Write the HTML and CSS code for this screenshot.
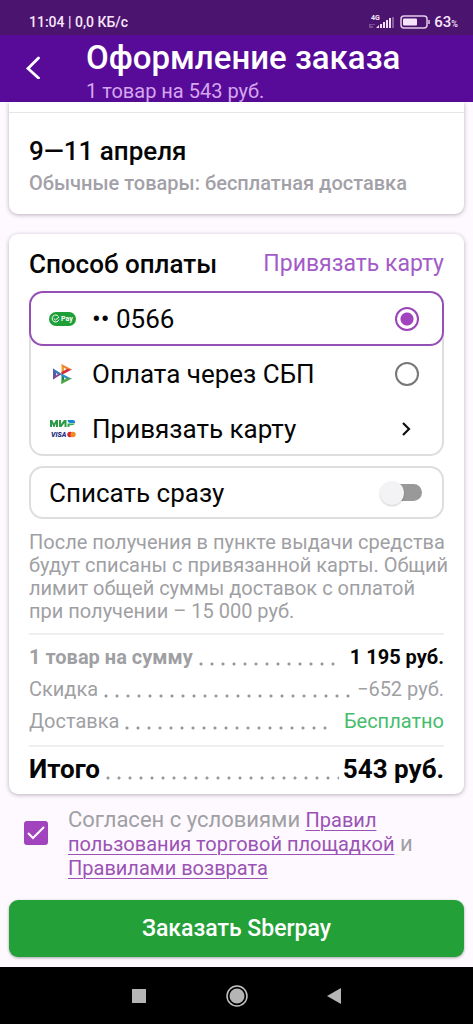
FILE: index.html
```html
<!DOCTYPE html>
<html lang="ru">
<head>
<meta charset="utf-8">
<meta name="viewport" content="width=device-width, initial-scale=1">
<title>Оформление заказа</title>
<link rel="stylesheet" href="styles.css">
</head>
<body>
<div class="status">
  <span class="status-time">11:04 | 0,0 КБ/с</span>
  <span class="status-right">
    <svg class="signal" width="25" height="16" viewBox="0 0 25 16" aria-hidden="true">
      <text class="signal-text" x="2" y="6">4G</text>
      <path d="M1 10v4M3 10v1M3 12v2M5 10v1" stroke="#a787b8"/>
      <path d="M7 14l3-3v3z" fill="#f3def6"/>
      <path d="M12 14V10M15 14V8M18 14V6M21 14V4" stroke="#f3def6" stroke-width="2"/>
      <path d="M24 14V3" stroke="#84619b" stroke-width="2"/>
    </svg>
    <svg class="battery" width="30" height="14" viewBox="0 0 30 14" aria-hidden="true">
      <rect x="1" y="1" width="26" height="12" rx="3" fill="none" stroke="#e3cbea" stroke-width="1.5"/>
      <rect x="3" y="3.5" width="14" height="7" rx="1" fill="#f5e4f7"/>
      <path d="M29 5v4" stroke="#e3cbea" stroke-width="1.5"/>
    </svg>
    <span class="status-charge">63<small>%</small></span>
  </span>
</div>

<header class="header">
  <button class="back" type="button" aria-label="Назад">
    <svg width="16" height="24" viewBox="0 0 16 24" aria-hidden="true"><path d="M13.500 3 3 13.500 13.500 23" fill="none" stroke="#fff" stroke-width="2.800" stroke-linecap="round"/></svg>
  </button>
  <div class="header-text">
    <h1 class="title">Оформление заказа</h1>
    <p class="subtitle">1 товар на 543 руб.</p>
  </div>
</header>

<main class="content">
  <section class="card delivery">
    <div class="delivery-body">
      <h2 class="heading">9—11 апреля</h2>
      <p class="delivery-note">Обычные товары: бесплатная доставка</p>
    </div>
  </section>

  <section class="card payment">
    <div class="payment-head">
      <h2 class="heading">Способ оплаты</h2>
      <a class="link-card" href="#">Привязать карту</a>
    </div>

    <div class="options">
      <label class="option option-selected">
        <svg class="logo" width="28" height="14" viewBox="0 0 28 14" aria-hidden="true">
          <rect width="27" height="14" rx="7" fill="#1f9f38"/>
          <path d="M9.500 4.500A3.500 3.500 0 1 0 10 7.500M4.800 6.500l1.700 1.500L10 5" fill="none" stroke="#fff" stroke-width="1"/>
          <text class="pay-text" x="12" y="9">Pay</text>
        </svg>
        <span class="option-name">•• 0566</span>
        <input class="radio" type="radio" name="pay" checked>
      </label>
      <label class="option">
        <svg class="logo" width="28" height="22" viewBox="0 0 28 22" aria-hidden="true">
          <path d="M4 5.500v11l3-2V8z" fill="#5b57a2"/>
          <path d="M4 5.500 13 11l-4 .500L5.500 9z" fill="#3c78bb"/>
          <path d="M4 16.500 13 11H9l-3.500 2.500z" fill="#8b4a91"/>
          <path d="M12.500 1v10l2.500-1.500V4z" fill="#e9a22c"/>
          <path d="M12.500 1 23 6.500h-5L13.500 4z" fill="#ef8532"/>
          <path d="M23 6.500 12.500 12v-3L18 6z" fill="#d42c3b"/>
          <path d="M12.500 11v10l2.500-2v-6z" fill="#24804c"/>
          <path d="M12.500 10.500 23 16h-5l-5.500-3z" fill="#288bd0"/>
          <path d="M23 15.500l-10.500 5.500v-3l5.500-3z" fill="#4da545"/>
        </svg>
        <span class="option-name">Оплата через СБП</span>
        <input class="radio" type="radio" name="pay">
      </label>
      <button class="option option-more" type="button">
        <svg class="logo" width="28" height="20" viewBox="0 0 28 20" aria-hidden="true">
          <path d="M1 8V1h2.200L5 4.500 6.800 1H9v7H7V4.500L5.600 8H4.400L3 4.500V8z" fill="#2b9a46"/>
          <path d="M10 8V1h2v4l3-4h2.500v7h-2V4l-3 4z" fill="#2b9a46"/>
          <path d="M18.500 8V4.500H26Q25.200 6.300 23 6.300h-2.500V8z" fill="#35a856"/>
          <path d="M18.500 1H24q2.500.3 2 3h-5q-2 0-2.500-3z" fill="#1686cf"/>
          <text class="visa-text" x="2" y="18">VISA</text>
          <circle cx="21" cy="15.500" r="2.700" fill="#d9232e"/>
          <circle cx="24" cy="15.500" r="2.700" fill="#ef8a28"/>
        </svg>
        <span class="option-name">Привязать карту</span>
        <svg class="chevron" width="24" height="16" viewBox="0 0 24 16" aria-hidden="true"><path d="M8 2l6 6-6 6" fill="none" stroke="#111" stroke-width="2.200"/></svg>
      </button>
    </div>

    <label class="switch-row">
      <span>Списать сразу</span>
      <input class="switch" type="checkbox" role="switch">
    </label>

    <p class="note">После получения в пункте выдачи средства будут списаны с привязанной карты. Общий лимит общей суммы доставок с оплатой при получении – 15 000 руб.</p>

    <dl class="summary">
      <div class="sum-row sum-goods"><dt>1 товар на сумму</dt><dd>1 195 руб.</dd></div>
      <div class="sum-row"><dt>Скидка</dt><dd>−652 руб.</dd></div>
      <div class="sum-row sum-free"><dt>Доставка</dt><dd>Бесплатно</dd></div>
      <div class="sum-row sum-total"><dt>Итого</dt><dd>543 руб.</dd></div>
    </dl>
  </section>

  <div class="agree">
    <input class="check" id="agree" type="checkbox" checked>
    <label class="agree-text" for="agree">Согласен с условиями <a href="#">Правил пользования торговой площадкой</a> и <a href="#">Правилами возврата</a></label>
  </div>

  <button class="order" type="button">Заказать Sberpay</button>
</main>

<nav class="nav" aria-label="Система">
  <button class="nav-button" type="button" aria-label="Недавние"><svg width="24" height="24" viewBox="0 0 24 24"><rect x="5" y="5" width="14" height="14" fill="#b5b5b5"/></svg></button>
  <button class="nav-button" type="button" aria-label="Домой"><svg width="24" height="24" viewBox="0 0 24 24"><circle cx="12" cy="12" r="10" fill="none" stroke="#c4c4c4" stroke-width="1.500"/><circle cx="12" cy="12" r="7.500" fill="#b5b5b5"/></svg></button>
  <button class="nav-button" type="button" aria-label="Назад"><svg width="24" height="24" viewBox="0 0 24 24"><path d="M4 12l14-8v16z" fill="#b5b5b5"/></svg></button>
</nav>
</body>
</html>
```
FILE: styles.css
```css
* { box-sizing: border-box; }

body {
  margin: 0;
  min-height: 100vh;
  display: flex;
  flex-direction: column;
  background: #fdf9fe;
  color: #050505;
  font-family: Roboto, "Noto Sans", sans-serif;
}

h1, h2, p, dl, dd { margin: 0; }

button {
  border: 0;
  padding: 0;
  background: none;
  color: inherit;
  font: inherit;
}

svg { flex: none; }

.status {
  display: flex;
  justify-content: space-between;
  align-items: center;
  height: 35px;
  padding: 8px 15px 0 29px;
  background: #4b146f;
  color: #f9e6fb;
  font-size: 14px;
  font-weight: 500;
}

.status-right { display: flex; align-items: center; }
.signal { margin-right: 6px; }
.signal-text { font-size: 7px; font-weight: 700; fill: #f9e6fb; }
.battery { margin-right: 4px; }
.status-charge { font-size: 15px; }
.status-charge small { font-size: 9px; }

.header {
  display: flex;
  min-height: 67px;
  background: #570b98;
  color: #fff;
}

.back { width: 86px; padding: 0 0 0 25px; text-align: left; }
.title { font-size: 33px; font-weight: 500; line-height: 46px; }
.subtitle { color: #d5a6ee; font-size: 20px; line-height: 21px; }

.content {
  flex: 1;
  display: flex;
  flex-direction: column;
  padding: 0 9px 10px;
}

.card {
  border-radius: 9px;
  background: #fff;
  box-shadow: 0 1px 4px rgba(60, 40, 70, 0.35);
}

.delivery { padding-top: 10px; border-radius: 0 0 9px 9px; }
.delivery-body { padding: 22px 20px 19px; border-top: 1px solid #e6e4e7; }
.heading { font-size: 26px; font-weight: 500; line-height: 32px; }
.delivery-note { margin-top: 4px; color: #a3a1a8; font-size: 20px; font-weight: 500; line-height: 24px; }

.payment { margin-top: 20px; padding: 14px 20px 9px; }
.payment-head { display: flex; justify-content: space-between; align-items: center; }
.link-card { color: #a35bc8; font-size: 23px; line-height: 32px; text-decoration: none; }

.options, .switch-row { border-radius: 14px; box-shadow: inset 0 0 0 2px #dfdde0; }
.options { margin-top: 11px; }

.option {
  display: flex;
  align-items: center;
  width: 100%;
  height: 55px;
  padding: 0 25px 0 20px;
  font-size: 26px;
  text-align: left;
}

.option-selected { border-radius: 14px; background: #fff; box-shadow: inset 0 0 0 2px #9450b4; }
.logo { margin-right: 15px; }
.pay-text { font-size: 7px; font-weight: 700; fill: #fff; }
.visa-text { font-size: 7px; font-weight: 900; font-style: italic; fill: #25317f; }
.option-name { flex: 1; }

.radio {
  appearance: none;
  width: 24px;
  height: 24px;
  margin: 0;
  border: 2px solid #777;
  border-radius: 50%;
}

.radio:checked { border-color: #9b45b8; background: radial-gradient(circle, #a244bd 6px, transparent 7px); }

.switch-row {
  display: flex;
  justify-content: space-between;
  align-items: center;
  height: 53px;
  margin-top: 10px;
  padding: 0 22px 0 20px;
  font-size: 26px;
}

.switch {
  appearance: none;
  display: flex;
  align-items: center;
  width: 36px;
  height: 17px;
  margin: 0;
  border-radius: 9px;
  background: #999;
}

.switch::before {
  content: "";
  width: 24px;
  height: 24px;
  flex: none;
  margin-left: -6px;
  border-radius: 50%;
  background: #f3f2f4;
  box-shadow: 0 1px 2px rgba(0, 0, 0, 0.2);
}

.note { margin: 12px -10px 0 0; color: #a09fa4; font-size: 20px; line-height: 23px; }

.summary { margin-top: 10px; padding-top: 6px; border-top: 2px solid #efeef0; }
.sum-row { display: flex; color: #a09fa4; font-size: 20px; line-height: 32px; }
.sum-row dt { flex: 1; display: flex; }

.sum-row dt::after {
  content: "";
  flex: 1;
  margin: 0 4px 0 2px;
  background: radial-gradient(circle at 6px 23px, #9a989d 1px, transparent 2px) 0 0 / 11px 32px repeat-x;
}

.sum-goods { font-weight: 700; }
.sum-goods dd { color: #050505; }
.sum-goods dt::after, .sum-free dt::after { margin-right: 10px; }
.sum-free dd { color: #45bd6b; }

.sum-total {
  margin-top: 8px;
  padding-top: 6px;
  border-top: 2px solid #efeef0;
  color: #050505;
  font-size: 26px;
  font-weight: 700;
}

.sum-total dt::after { background-position-y: 2px; }

.agree { display: flex; align-items: center; margin-top: 14px; padding: 0 15px; }

.check {
  appearance: none;
  flex: none;
  width: 24px;
  height: 24px;
  margin: 0 20px 22px 0;
  border: 2px solid #9f45bc;
  border-radius: 3px;
}

.check:checked {
  background: #a244bd url("data:image/svg+xml,%3Csvg xmlns='http://www.w3.org/2000/svg' viewBox='0 0 20 20'%3E%3Cpath d='M2 10l5 5L18 4' fill='none' stroke='%23fff' stroke-width='2'/%3E%3C/svg%3E") center / 20px 20px no-repeat;
}

.agree-text { color: #a09fa4; font-size: 22px; line-height: 24px; }
.agree-text a { color: #9b52b5; font-size: 20px; text-decoration-thickness: 1px; text-underline-offset: 3px; }

.order {
  height: 57px;
  margin-top: auto;
  border-radius: 9px;
  background: #23a138;
  box-shadow: 0 1px 3px rgba(0, 0, 0, 0.35);
  color: #fff;
  font-size: 23px;
  font-weight: 500;
}

.nav {
  display: flex;
  justify-content: center;
  gap: 74px;
  height: 57px;
  background: #000;
}

.nav-button { display: flex; align-items: center; }
```
